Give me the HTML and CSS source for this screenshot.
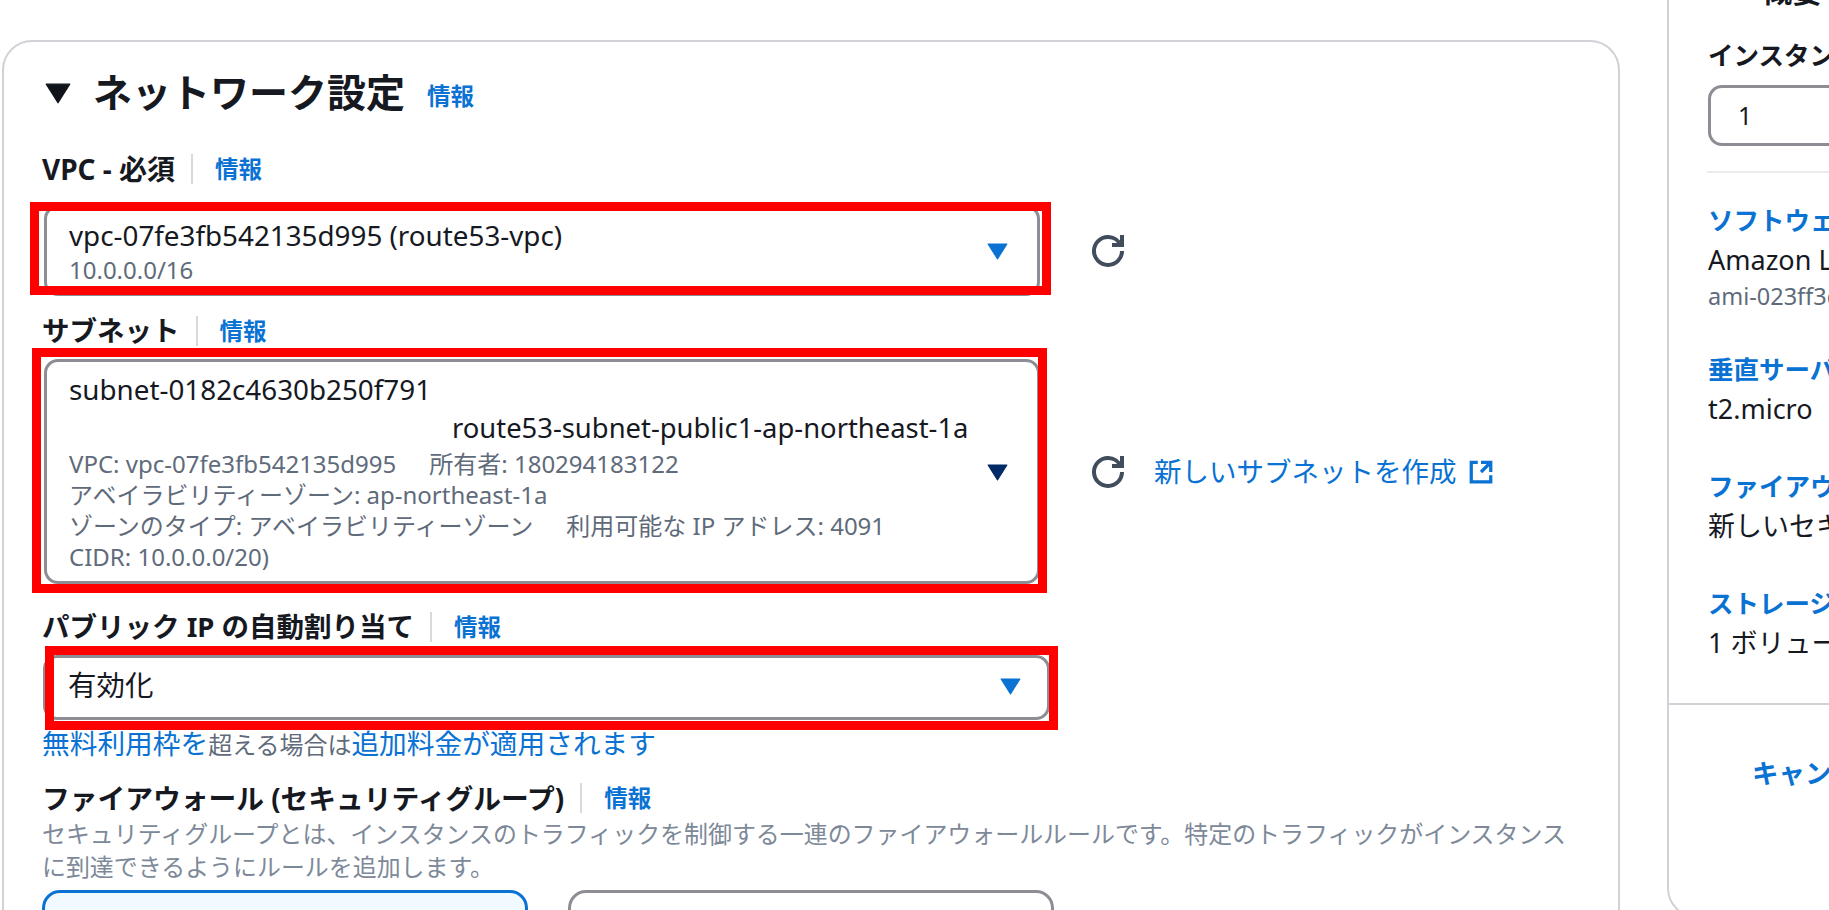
FILE: index.html
```html
<!DOCTYPE html>
<html lang="ja">
<head>
<meta charset="utf-8">
<title>ネットワーク設定</title>
<link rel="stylesheet" href="styles.css">
</head>
<body>
<svg class="defs" width="0" height="0" aria-hidden="true">
  <symbol id="refresh" viewBox="0 0 16 16"><path d="M10 5h5V0"/><path d="M15 8a6.957 6.957 0 0 1-7 7 6.957 6.957 0 0 1-7-7 6.957 6.957 0 0 1 7-7 6.87 6.87 0 0 1 6.45 4.34"/></symbol>
  <symbol id="caret" viewBox="0 0 20 17" preserveAspectRatio="none"><polygon points="1,1 19,1 10,16"/></symbol>
</svg>
<main class="card">
  <header class="title-row">
    <svg class="title-caret"><use href="#caret"/></svg>
    <h2 class="title">ネットワーク設定</h2>
    <a class="info info-title">情報</a>
  </header>

  <div class="label-row row-vpc"><span class="label">VPC - 必須</span><a class="info">情報</a></div>
  <div class="field field-vpc">
    <div class="select select-vpc">
      <div class="main-text">vpc-07fe3fb542135d995 (route53-vpc)</div>
      <div class="sub-text">10.0.0.0/16</div>
      <svg class="caret"><use href="#caret"/></svg>
    </div>
    <svg class="refresh"><use href="#refresh"/></svg>
    <div class="mark mark-vpc"></div>
  </div>

  <div class="label-row row-subnet"><span class="label">サブネット</span><a class="info">情報</a></div>
  <div class="field field-subnet">
    <div class="select select-subnet">
      <div class="main-text">subnet-0182c4630b250f791</div>
      <div class="main-text subnet-name">route53-subnet-public1-ap-northeast-1a</div>
      <div class="sub-text sub-first">VPC: vpc-07fe3fb542135d995<span class="sep">所有者: 180294183122</span></div>
      <div class="sub-text">アベイラビリティーゾーン: ap-northeast-1a</div>
      <div class="sub-text">ゾーンのタイプ: アベイラビリティーゾーン<span class="sep">利用可能な IP アドレス: 4091</span></div>
      <div class="sub-text">CIDR: 10.0.0.0/20)</div>
      <svg class="caret caret-dark"><use href="#caret"/></svg>
    </div>
    <svg class="refresh"><use href="#refresh"/></svg>
    <a class="create">新しいサブネットを作成</a>
    <svg class="external" viewBox="0 0 16 16"><path d="M14 8.01v-6H8M14.02 2 8 8.01M6 2.01H2v12h12v-3.99"/></svg>
    <div class="mark mark-subnet"></div>
  </div>

  <div class="label-row row-ip"><span class="label">パブリック IP の自動割り当て</span><a class="info">情報</a></div>
  <div class="field field-ip">
    <div class="select select-ip">
      <div class="ip-text">有効化</div>
      <svg class="caret caret-ip"><use href="#caret"/></svg>
    </div>
    <div class="mark mark-ip"></div>
  </div>
  <p class="note"><a class="note-link">無料利用枠を</a><span class="note-gray">超える場合は</span><a class="note-link">追加料金が適用されます</a></p>

  <div class="label-row row-fw"><span class="label">ファイアウォール (セキュリティグループ)</span><a class="info">情報</a></div>
  <p class="desc">セキュリティグループとは、インスタンスのトラフィックを制御する一連のファイアウォールルールです。特定のトラフィックがインスタンスに到達できるようにルールを追加します。</p>
  <div class="tiles">
    <div class="tile tile-on"></div>
    <div class="tile"></div>
  </div>
</main>

<aside class="side">
  <h2 class="side-head">概要</h2>
  <div class="side-label">インスタンス数</div>
  <div class="side-input">1</div>
  <hr class="side-rule">
  <div class="item item-first">
    <a class="item-title">ソフトウェアイメージ (AMI)</a>
    <div class="item-value">Amazon Linux 2023 AMI</div>
    <div class="item-sub">ami-023ff3d4ab11b2525</div>
  </div>
  <div class="item">
    <a class="item-title">垂直サーバータイプ</a>
    <div class="item-value">t2.micro</div>
  </div>
  <div class="item">
    <a class="item-title">ファイアウォール</a>
    <div class="item-value">新しいセキュリティグループ</div>
  </div>
  <div class="item">
    <a class="item-title">ストレージ (ボリューム)</a>
    <div class="item-value">1 ボリューム</div>
  </div>
  <div class="side-foot"><a class="cancel">キャンセル</a></div>
</aside>
</body>
</html>
```

FILE: styles.css
```css
* { box-sizing: border-box; }
html, body { margin: 0; height: 910px; overflow: hidden; background: #fff; }
body {
  display: flex;
  align-items: flex-start;
  padding-left: 2px;
  width: 1829px;
  font-family: "Noto Sans", "Noto Sans CJK JP", sans-serif;
  color: #16191f;
}
.defs { position: absolute; }
a { color: #0972d3; text-decoration: none; }

.card {
  flex: none;
  width: 1618px;
  height: 1000px;
  margin-top: 40px;
  padding: 30px 0 0 38px;
  border: 2px solid #d1d1d8;
  border-radius: 30px;
}
.title-row { display: flex; align-items: center; height: 40px; }
.title-caret { width: 26px; height: 21px; margin: 3px 22px 0 3px; fill: #0f141a; stroke: #0f141a; stroke-width: 1; stroke-linejoin: round; }
.title { margin: 0; font-size: 39px; line-height: 40px; font-weight: 700; color: #16191f; }
.info { font-size: 23.5px; font-weight: 700; line-height: 30px; }
.info-title { margin: 8px 0 0 22px; }

.label-row { display: flex; align-items: center; height: 30px; }
.label { font-size: 27.5px; font-weight: 700; line-height: 30px; padding-right: 16px; margin-right: 22px; border-right: 2px solid #d5dbdb; white-space: nowrap; }
.row-vpc { margin-top: 42px; }
.row-vpc .label { font-size: 28px; }
.row-subnet { margin-top: 20px; }
.row-ip { margin-top: 28px; }
.row-fw { margin-top: 24px; }
.row-fw .label { font-size: 27.75px; }

.field { position: relative; display: flex; align-items: center; }
.field-vpc { margin-top: 21px; }
.field-subnet { margin-top: 13px; }
.field-ip { margin-top: 13px; }

.select { position: relative; flex: none; width: 996px; margin-left: 2px; padding-left: 22px; border: 3px solid #8d8d95; border-radius: 14px; background: #fff; }
.select-vpc { height: 91px; padding-top: 9px; }
.select-subnet { height: 225px; padding-top: 9px; }
.select-ip { width: 1007px; height: 65px; margin-left: 1px; padding-left: 22px; }
.main-text { font-size: 27.8px; line-height: 36px; color: #16191f; white-space: nowrap; }
.sub-text { font-size: 24px; line-height: 31px; color: #5f6b7a; white-space: nowrap; }
.select-vpc .sub-text { margin-top: 1px; }
.subnet-name { margin: 3px 0 0 383px; font-size: 27.4px; }
.sub-first { margin-top: 2px; }
.sep { margin-left: 33px; }
.ip-text { font-size: 28.5px; line-height: 55px; color: #16191f; }
.caret { position: absolute; right: 29px; top: 35px; width: 21px; height: 17px; fill: #0972d3; stroke: #0972d3; stroke-width: 1; stroke-linejoin: round; }
.caret-dark { top: 102px; fill: #002b66; stroke: #002b66; }
.caret-ip { right: 26px; top: 20px; }

.refresh { flex: none; width: 32px; height: 32px; margin-left: 52px; fill: none; stroke: #414d5c; stroke-width: 2; }
.create { margin-left: 30px; font-size: 27.5px; line-height: 36px; white-space: nowrap; }
.external { flex: none; width: 26px; height: 26px; margin-left: 11px; fill: none; stroke: #0972d3; stroke-width: 2; }

.mark { position: absolute; border: 9px solid #ff0000; pointer-events: none; }
.mark-vpc { left: -12px; top: -3px; width: 1021px; height: 93px; }
.mark-subnet { left: -10px; top: -11px; width: 1015px; height: 245px; }
.mark-ip { left: 3px; top: -9px; width: 1013px; height: 84px; }

.note { margin: 7px 0 0; height: 32px; line-height: 32px; white-space: nowrap; }
.note-link { font-size: 27.7px; color: #0972d3; }
.note-gray { font-size: 24px; color: #5f6b7a; }
.desc { width: 1540px; margin: 4px 0 0; font-size: 23.95px; line-height: 33px; color: #7d8998; }
.tiles { display: flex; gap: 40px; margin-top: 7px; }
.tile { width: 486px; height: 100px; border: 3px solid #8d8d95; border-radius: 18px; }
.tile-on { border-color: #0972d3; background: #f1faff; }

.side {
  flex: none;
  width: 400px;
  height: 958px;
  margin: -40px 0 0 47px;
  padding: 0 0 0 39px;
  border: 2px solid #d1d1d8;
  border-radius: 0 0 0 30px;
}
.side-head { margin: 0; height: 46px; padding: 12px 0 0 54px; font-size: 30px; line-height: 34px; font-weight: 700; }
.side-label { height: 30px; margin-top: 32px; font-size: 25.5px; line-height: 30px; font-weight: 700; white-space: nowrap; }
.side-input { width: 300px; height: 61px; margin-top: 15px; padding-left: 27px; border: 3px solid #8d8d95; border-radius: 14px; font-size: 24.5px; line-height: 55px; }
.side-rule { height: 2px; margin: 25px 0 0 -1px; border: 0; background: #e9ebed; }
.item { margin-top: 37px; white-space: nowrap; }
.item-first { margin-top: 30px; padding-bottom: 6px; }
.item-title { display: block; font-size: 25.5px; line-height: 34px; font-weight: 700; }
.item-value { font-size: 27px; line-height: 46px; }
.item-sub { font-size: 23.5px; line-height: 26px; color: #5f6b7a; }
.side-foot { height: 220px; margin: 37px 0 0 -39px; padding: 50px 0 0 83px; border-top: 2px solid #d1d1d8; }
.cancel { font-size: 26.5px; line-height: 36px; font-weight: 700; }
```
